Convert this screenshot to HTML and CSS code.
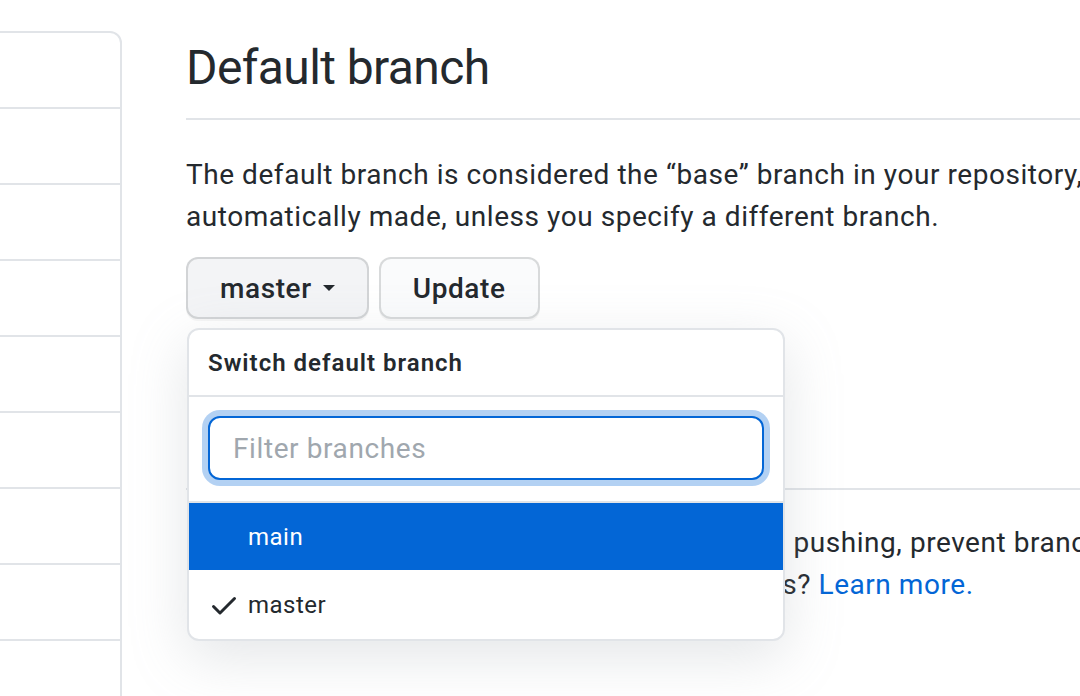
FILE: index.html
```html
<!DOCTYPE html>
<html lang="en">
<head>
<meta charset="utf-8">
<title>Branches</title>
<link rel="stylesheet" href="styles.css">
</head>
<body>
<div class="page">
  <nav class="sidebar" aria-label="Settings">
    <div class="side-item"></div>
    <div class="side-item"></div>
    <div class="side-item"></div>
    <div class="side-item"></div>
    <div class="side-item"></div>
    <div class="side-item"></div>
    <div class="side-item"></div>
    <div class="side-item"></div>
    <div class="side-item"></div>
  </nav>
  <main class="content">
    <div class="subhead"><h2 class="subhead-title">Default branch</h2></div>
    <p class="desc desc-first">The default branch is considered the “base” branch in your repository, against which all pull requests and code commits are<br>automatically made, unless you specify a different branch.</p>
    <div class="branch-form">
      <div class="buttons">
        <button class="btn btn-open" type="button">master<span class="caret"></span></button>
        <button class="btn" type="button">Update</button>
      </div>
      <div class="menu">
        <div class="menu-header">Switch default branch</div>
        <div class="menu-filter">
          <input class="filter-input" type="text" placeholder="Filter branches">
        </div>
        <div class="menu-item menu-item-active">
          <span class="icon-slot"></span>
          <span>main</span>
        </div>
        <div class="menu-item menu-item-last">
          <svg class="icon-slot" viewBox="0 0 16 16" width="32" height="32" aria-hidden="true"><path fill="#24292e" d="M13.78 4.22a.75.75 0 010 1.06l-7.25 7.25a.75.75 0 01-1.06 0L2.22 9.28a.75.75 0 011.06-1.06L6 10.94l6.72-6.72a.75.75 0 011.06 0z"/></svg>
          <span>master</span>
        </div>
      </div>
    </div>
    <div class="subhead subhead-spacious"><h2 class="subhead-title">Branch protection rules</h2></div>
    <p class="desc">Define branch protection rules to disable force pushing, prevent branches from being deleted, and optionally require status checks<br>before merging. New to branch protection rules? <a class="link" href="#">Learn more.</a></p>
  </main>
</div>
</body>
</html>
```

FILE: styles.css
```css
html, body {
  margin: 0;
  height: 100%;
  overflow: hidden;
  background: #ffffff;
}

body {
  font-family: Roboto, "Liberation Sans", Arial, sans-serif;
  color: #24292e;
}

.page {
  display: flex;
  align-items: flex-start;
  padding-top: 31px;
}

.sidebar {
  flex: 0 0 460px;
  margin-left: -338px;
  box-sizing: border-box;
  border: 2px solid #e1e4e8;
  border-radius: 12px;
}

.side-item {
  height: 74px;
  border-bottom: 2px solid #e1e4e8;
}

.content {
  flex: 0 0 1400px;
  margin-left: 64px;
  padding-top: 7px;
}

.subhead {
  padding-bottom: 20px;
  border-bottom: 2px solid #e1e4e8;
  margin-bottom: 32px;
}

.subhead-spacious {
  margin-top: 89px;
}

.subhead-title {
  margin: 0;
  font-size: 48px;
  font-weight: 400;
  line-height: 60px;
  letter-spacing: -0.6px;
}

.desc {
  margin: 0;
  font-size: 28px;
  line-height: 42px;
  letter-spacing: 0.55px;
  white-space: nowrap;
}

.desc-first {
  padding-top: 2px;
  margin-bottom: 19px;
}

.link {
  color: #0366d6;
  text-decoration: none;
}

.branch-form {
  position: relative;
}

.buttons {
  display: flex;
  gap: 10px;
}

.btn {
  height: 62px;
  box-sizing: border-box;
  padding: 0 32px;
  display: inline-flex;
  align-items: center;
  gap: 11px;
  font-family: inherit;
  font-size: 28px;
  font-weight: 500;
  letter-spacing: 0.6px;
  color: #24292e;
  background: #fafbfc;
  border: 2px solid rgba(27, 31, 35, 0.15);
  border-radius: 12px;
  box-shadow: 0 2px 0 rgba(27, 31, 35, 0.04);
}

.btn-open {
  background: #f3f4f6;
}

.caret {
  width: 0;
  height: 0;
  border-top: 6px solid #24292e;
  border-left: 6px solid transparent;
  border-right: 6px solid transparent;
}

.menu {
  position: absolute;
  top: 71px;
  left: 1px;
  width: 598px;
  box-sizing: border-box;
  background: #ffffff;
  border: 2px solid #e1e4e8;
  border-radius: 12px;
  box-shadow: 0 16px 56px rgba(149, 157, 165, 0.26);
  overflow: hidden;
  z-index: 10;
}

.menu-header {
  height: 65px;
  display: flex;
  align-items: center;
  padding: 0 19px;
  border-bottom: 2px solid #e1e4e8;
  font-size: 24px;
  font-weight: 600;
  letter-spacing: 1px;
}

.menu-filter {
  padding: 19px 19px 21px;
  border-bottom: 2px solid #e1e4e8;
}

.filter-input {
  display: block;
  width: 100%;
  height: 64px;
  box-sizing: border-box;
  padding: 0 23px;
  font-family: inherit;
  font-size: 28px;
  letter-spacing: 0.6px;
  color: #24292e;
  border: 2px solid #0366d6;
  border-radius: 12px;
  box-shadow: 0 0 0 6px rgba(3, 102, 214, 0.3);
  outline: none;
}

.filter-input::placeholder {
  color: #a0a7ae;
}

.menu-item {
  height: 67px;
  display: flex;
  align-items: center;
  gap: 8px;
  padding: 0 19px;
  font-size: 24px;
  letter-spacing: 0.5px;
}

.menu-item-active {
  background: #0366d6;
  color: #ffffff;
}

.menu-item-last {
  height: 69px;
}

.icon-slot {
  width: 32px;
  height: 32px;
  flex: none;
  display: block;
}
```
